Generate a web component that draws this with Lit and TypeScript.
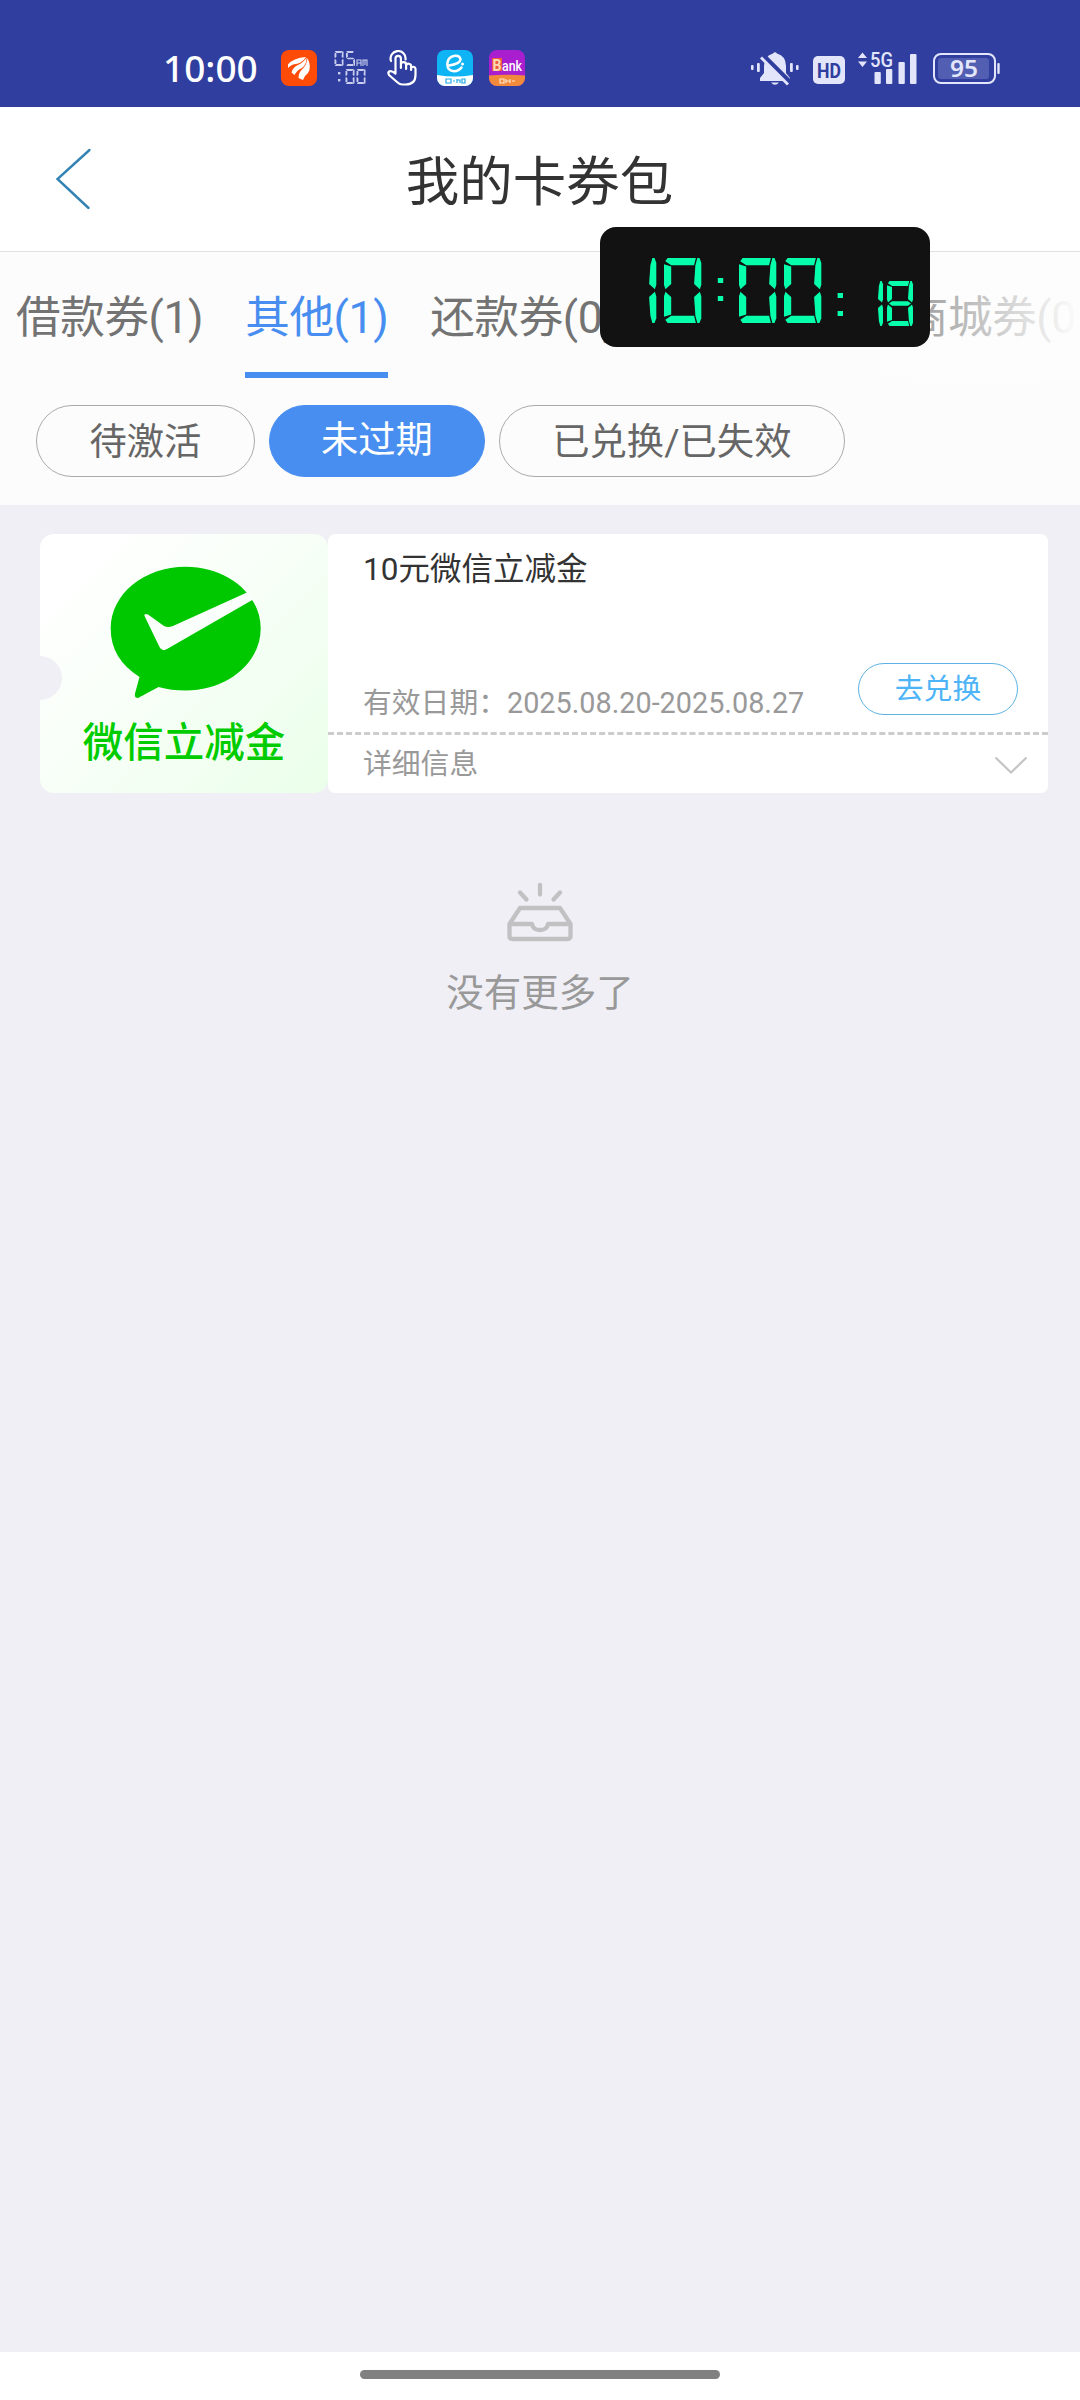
import { LitElement, html, svg, css } from "lit";
import { customElement, property } from "lit/decorators.js";
import { classMap } from "lit/directives/class-map.js";

// Seven-segment patterns, in the order: top, upper right, lower right, bottom, lower left, upper left, middle
const SEGMENTS: Record<string, number[]> = {
  "0": [1, 1, 1, 1, 1, 1, 0],
  "1": [0, 1, 1, 0, 0, 0, 0],
  "5": [1, 0, 1, 1, 0, 1, 1],
  "8": [1, 1, 1, 1, 1, 1, 1],
};

function digit(d: string, x: number, y: number, w: number, h: number, t: number) {
  const on = SEGMENTS[d];
  const r = t / 2;
  const m = y + h / 2;
  const g = t * 0.18;
  const pts = [
    // each segment is a bevelled bar
    [[x + g, y + r * 0.9], [x + r, y], [x + w - r * 1.5, y], [x + w - t, y + t], [x + t, y + t]],
    [[x + w - t + g, y + t], [x + w - r * 1.1, y], [x + w - r * 0.5, y], [x + w, y + r * 1.3], [x + w, m - t * 0.8], [x + w - r * 0.4, m - g], [x + w - t, m - t * 0.9]],
    [[x + w - t, m + t * 0.9], [x + w - r * 0.4, m + g], [x + w, m + t * 0.8], [x + w, y + h - r * 1.3], [x + w - r * 0.5, y + h], [x + w - r * 1.1, y + h], [x + w - t + g, y + h - t]],
    [[x + g, y + h - r * 0.9], [x + r, y + h], [x + w - r * 1.5, y + h], [x + w - t, y + h - t], [x + t, y + h - t]],
    [[x, m + t * 0.8], [x + r * 0.4, m + g], [x + t, m + t * 0.9], [x + t, y + h - t - g], [x, y + h - r - g * 2]],
    [[x, y + r + g * 2], [x + t, y + t + g], [x + t, m - t * 0.9], [x + r * 0.4, m - g], [x, m - t * 0.8]],
    [[x + r * 0.8, m], [x + t, m - r * 0.9], [x + w - t, m - r * 0.9], [x + w - r * 0.8, m], [x + w - t, m + r * 0.9], [x + t, m + r * 0.9]],
  ];
  return pts.map((p, i) => (on[i] ? svg`<polygon points=${p.map((q) => q.join(",")).join(" ")} />` : null));
}

@customElement("status-bar")
class StatusBar extends LitElement {
  static styles = css`
    :host { display: block; }
    .bar { height: 107px; box-sizing: border-box; padding: 18px 79px 0 163px; background: #303e9f; display: flex; align-items: center; }
    .time { width: 118px; font: 500 37px/50px "Noto Sans", sans-serif; color: #fff; margin-top: 10px; }
    .left { display: flex; gap: 16px; align-items: center; height: 36px; margin-top: 11px; }
    .right { margin-left: auto; height: 46px; margin-top: 11px; }
    svg { display: block; }
    .t { font-family: "Noto Sans", sans-serif; font-weight: 600; }
    .c { font-family: Roboto, sans-serif; font-weight: 700; }
    .m { font-family: Roboto, sans-serif; font-weight: 500; }
  `;
  render() {
    return html`<div class="bar">
      <div class="time">10:00</div>
      <div class="left">
        <svg width="36" height="36" viewBox="0 0 36 36">
          <rect width="36" height="36" rx="8" fill="#ff4b08" />
          <g fill="#fff">
            <path d="M7 14.500Q12 8 25 7Q21 13 15 14Q11 14 7 18Z" />
            <path d="M10.500 22.500Q12 17 17 15Q22 13 25.500 7.500Q26 14 21 18Q16 20 13.500 25Z" />
            <path d="M17.500 28Q17.500 22 22 18.500Q26 14 26.500 8Q31 17 27 23Q24 25 22 30Z" />
          </g>
        </svg>
        <svg width="36" height="36" viewBox="0 0 36 36" fill="#c9ceee">
          ${digit("0", 1.5, 1, 9, 15, 1.9)}${digit("5", 13, 1, 9, 15, 1.9)}
          <path d="M24 16V10H28V16M24 13H28M30 16V10H34V16M32 10V15" stroke="#c9ceee" stroke-width="1.1" fill="none" />
          <rect x="5" y="22" width="2.4" height="2.4" /><rect x="5" y="29" width="2.4" height="2.4" />
          ${digit("0", 12.5, 19, 9, 15, 1.9)}${digit("0", 23.5, 19, 9, 15, 1.9)}
        </svg>
        <svg width="36" height="36" viewBox="-1.500 0 36 36" fill="none" stroke="#fff" stroke-width="2.2" stroke-linecap="round" stroke-linejoin="round">
          <path d="M4.5 11A7.5 7.5 0 1 1 19 9.5" />
          <path d="M9 23V8.500A2.7 2.7 0 0 1 14.4 8.500V18M14.4 14.500A2.6 2.6 0 0 1 19.6 14.800V19M19.6 16A2.500 2.500 0 0 1 24.6 16.500V20M24.6 18A2.4 2.4 0 0 1 29 18.500V25Q29 34.500 19 34.500H16Q13 34.500 10.500 32L2.500 25Q1 22.500 3 21.300Q5 20.500 9 23.500" />
        </svg>
        <svg width="36" height="36" viewBox="0 0 36 36">
          <rect width="36" height="36" rx="8" fill="#0fb4f5" />
          <path d="M0 25Q18 28 36 25V28A8 8 0 0 1 28 36H8A8 8 0 0 1 0 28Z" fill="#fff" />
          <path d="M12 15.500Q23 14 23.500 9.500Q23 5.500 18 5.800Q10.500 7 10.300 14Q10.500 21 17 21.300Q22 21 24.500 17.500" fill="none" stroke="#fff" stroke-width="2.500" stroke-linecap="round" />
          <circle cx="25.500" cy="14" r="1.500" fill="#fff" />
          <path d="M9 29H14V33H9ZM16 31H18M20 29V33M20 30H23V33M25 29H28V33H25Z" fill="none" stroke="#23a9e8" stroke-width="1.2" />
        </svg>
        <svg width="36" height="36" viewBox="0 0 36 36">
          <rect width="36" height="36" rx="8" fill="#a91fd0" />
          <path d="M0 25.500Q18 24 36 25.500V28A8 8 0 0 1 28 36H8A8 8 0 0 1 0 28Z" fill="#f28a3c" />
          <rect x="3" y="8" width="10" height="13" fill="#f0583f" />
          <text class="c" x="3.500" y="21" font-size="17" fill="#ffd9b0" textLength="9" lengthAdjust="spacingAndGlyphs">B</text>
          <text class="m" x="13" y="21" font-size="15" fill="#fff" textLength="20" lengthAdjust="spacingAndGlyphs">ank</text>
          <path d="M11 29H15V33H11ZM17 29V33M17 31H21M21 29V33M23 31H26" fill="none" stroke="#ffe3c8" stroke-width="1.2" />
        </svg>
      </div>
      <svg class="right" width="252" height="46" viewBox="749 45 252 46" fill="#e3e6fa">
        <rect x="751" y="65" width="2.6" height="5" rx="1" /><rect x="757" y="63" width="2.8" height="9" rx="1" />
        <rect x="790" y="63" width="2.8" height="9" rx="1" /><rect x="796" y="65" width="2.6" height="5" rx="1" />
        <path d="M773 53.5Q775 51 777 53.5Q786 56 786 66V73L790 78V81H760V78L764 73V66Q764 56 773 53.5ZM771 82.5H779Q775 87 771 82.5Z" />
        <path d="M762 55L790 83" stroke="#303e9f" stroke-width="6" /><path d="M761 57.5L788 84.5" stroke="#e3e6fa" stroke-width="2.8" />
        <rect x="813" y="56" width="32" height="28" rx="5" />
        <text class="c" x="817" y="77.5" font-size="21" fill="#303e9f" textLength="24" lengthAdjust="spacingAndGlyphs">HD</text>
        <path d="M858 58L862.5 52.5L867 58ZM858 61.5L862.5 67L867 61.5Z" />
        <text class="m" x="870" y="67" font-size="20" textLength="23" lengthAdjust="spacingAndGlyphs">5G</text>
        <rect x="874.5" y="72" width="6.3" height="12" rx="1" /><rect x="886" y="69" width="6.3" height="15" rx="1" />
        <rect x="898.5" y="62" width="6.3" height="22" rx="1" /><rect x="910" y="54" width="6.5" height="30" rx="1" />
        <rect x="934" y="54" width="61" height="29" rx="7" fill="none" stroke="#e3e6fa" stroke-width="2" />
        <rect x="938" y="58" width="51" height="21" rx="3" fill="#525eb2" />
        <rect x="997.3" y="63" width="2.4" height="11" rx="1" />
        <text class="t" x="950" y="77.3" font-size="24" textLength="28" lengthAdjust="spacingAndGlyphs">95</text>
      </svg>
    </div>`;
  }
}

@customElement("floating-clock")
class FloatingClock extends LitElement {
  static styles = css`
    :host { display: block; width: 330px; height: 120px; border-radius: 16px; background: #121212; overflow: hidden; }
    svg { display: block; }
  `;
  render() {
    return html`<svg width="330" height="120" viewBox="600 227 330 120" fill="#06ffab">
      ${digit("1", 619, 258, 37.3, 65, 7.2)}${digit("0", 664, 258, 37.3, 65, 7.2)}
      <rect x="717.8" y="278" width="5.4" height="5" /><rect x="717.8" y="296" width="5.4" height="5" />
      ${digit("0", 739, 258, 37.3, 65, 7.2)}${digit("0", 784, 258, 37.3, 65, 7.2)}
      <rect x="837.6" y="293" width="5.4" height="5" /><rect x="837.6" y="311" width="5.4" height="5" />
      ${digit("1", 857, 281, 26, 45, 5)}${digit("8", 887, 281, 26, 45, 5)}
    </svg>`;
  }
}

@customElement("coupon-card")
class CouponCard extends LitElement {
  @property() name = "";
  @property() brand = "";
  @property() period = "";
  static styles = css`
    :host { display: flex; height: 259px; }
    .art { position: relative; overflow: hidden; width: 288px; border-radius: 14px; background: linear-gradient(135deg, #fff 10%, #f6fff6 55%, #eaffea 100%); display: flex; flex-direction: column; align-items: center; padding-top: 32px; box-sizing: border-box; }
    .art::before { content: ""; position: absolute; left: -22px; top: 122px; width: 44px; height: 44px; border-radius: 50%; background: #f0eff5; }
    .art svg { display: block; margin-left: 3px; }
    .brand { font-size: 40.5px; line-height: 56px; font-weight: 500; color: #0c0; margin-top: 17px; white-space: nowrap; }
    .info { flex: 1; background: #fff; border-radius: 7px; display: flex; flex-direction: column; }
    .main { height: 198px; box-sizing: border-box; padding: 13px 30px 17px 35px; display: flex; flex-direction: column; justify-content: space-between; }
    .name { font-size: 31.5px; line-height: 46px; color: #333; }
    .row { display: flex; justify-content: space-between; align-items: flex-end; }
    .period { font-size: 28.8px; line-height: 40px; color: #999; margin-bottom: -8px; white-space: pre; }
    .use { box-sizing: border-box; width: 160px; height: 52px; border: 1px solid #5fb2e2; border-radius: 26px; font-size: 28.8px; line-height: 50px; text-align: center; color: #4db4f8; }
    .more { flex: 1; border-top: 3px dashed #ccc; padding: 0 20px 6px 35px; display: flex; align-items: center; justify-content: space-between; font-size: 28.8px; color: #999; }
    .more svg { margin-top: 9px; }
  `;
  render() {
    return html`
      <div class="art">
        <svg width="152" height="132" viewBox="109 566 152 132">
          <path fill="#00c800" d="M184.7 566.7C226 566.7 259.7 594 259.7 628.6S226 690.6 184.7 690.6Q170 690.6 157.5 687L137 698Q133 698 134 693.5L138.5 677Q109.7 659 109.7 628.6C109.7 594 143 566.7 184.7 566.7Z" />
          <path fill="#fbfffb" d="M144 617Q142 613 147 614.5L163 626Q167 628 172 626L247 592L253 599L166 649Q161 652 158.500 647Z" />
        </svg>
        <div class="brand">${this.brand}</div>
      </div>
      <div class="info">
        <div class="main">
          <div class="name">${this.name}</div>
          <div class="row"><div class="period">有效日期：${this.period}</div><div class="use">去兑换</div></div>
        </div>
        <div class="more"><span>详细信息</span>
          <svg width="34" height="20" viewBox="0 0 34 20"><path d="M1.500 1.500L17 16.500L32.500 1.500" fill="none" stroke="#c4c4c4" stroke-width="2.200" /></svg>
        </div>
      </div>`;
  }
}

@customElement("app-root")
class AppRoot extends LitElement {
  static styles = css`
    :host { display: block; font-family: Roboto, "Noto Sans CJK SC", sans-serif; }
    .page { position: relative; width: 1080px; height: 2400px; background: #f0eff5; display: flex; flex-direction: column; overflow: hidden; }
    .header { height: 145px; box-sizing: border-box; border-bottom: 1px solid #e2e2e2; background: #fff; display: grid; grid-template-columns: 150px 1fr 150px; align-items: center; }
    .back { margin-left: 54px; margin-bottom: 1px; display: block; }
    .title { text-align: center; font-size: 53.5px; line-height: 70px; color: #333; margin: 8px 0 0 -1px; }
    .filters { height: 253px; background: #fcfcfc; }
    .tabs { position: relative; height: 126px; display: flex; overflow: hidden; padding-left: 16px; gap: 42px; font-size: 44.6px; letter-spacing: -0.4px; color: #737373; white-space: nowrap; }
    .tabs::after { content: ""; position: absolute; right: 0; top: 0; width: 240px; height: 126px; background: linear-gradient(90deg, rgba(253,253,253,0), #fdfdfd 100%); }
    .tab { flex: none; height: 126px; box-sizing: border-box; line-height: 66px; padding-top: 33px; }
    .tab.on { color: #488ef0; border-bottom: 6px solid #488ef0; }
    .tab.far { margin-left: auto; margin-right: -11px; }
    .chips { display: flex; gap: 14px; padding: 27px 36px 0; }
    .chip { height: 72px; box-sizing: border-box; border: 1px solid #aaa; border-radius: 36px; padding: 0 52.5px; font-size: 37.3px; line-height: 73px; color: #666; }
    .chip.on { color: #fff; background: #488ef0; border-color: #488ef0; line-height: 69px; padding: 0 51px; }
    .list { flex: 1; padding: 29px 32px 0 40px; }
    .empty { display: flex; flex-direction: column; align-items: center; margin: 89px 0 0 -8px; color: #999; font-size: 37.5px; line-height: 54px; gap: 24px; }
    .nav { height: 48px; background: #fff; display: flex; justify-content: center; align-items: flex-start; padding-top: 18px; box-sizing: border-box; }
    .pill { width: 360px; height: 9px; border-radius: 5px; background: #808080; }
    floating-clock { position: absolute; left: 600px; top: 227px; z-index: 2; }
  `;
  tabs = [
    { label: "借款券(1)" },
    { label: "其他(1)", on: true },
    { label: "还款券(0)" },
    { label: "商城券(0)", far: true },
  ];
  chips = [{ label: "待激活" }, { label: "未过期", on: true }, { label: "已兑换/已失效" }];
  render() {
    return html`<div class="page">
      <status-bar></status-bar>
      <div class="header">
        <svg class="back" width="38" height="62" viewBox="54 148 38 62"><path d="M89.500 150L57.500 179L88.500 208" fill="none" stroke="#3382b4" stroke-width="2.400" stroke-linecap="round" /></svg>
        <div class="title">我的卡券包</div>
      </div>
      <div class="filters">
        <div class="tabs">${this.tabs.map((t) => html`<div class=${classMap({ tab: true, on: !!t.on, far: !!t.far })}>${t.label}</div>`)}</div>
        <div class="chips">${this.chips.map((c) => html`<div class=${classMap({ chip: true, on: !!c.on })}>${c.label}</div>`)}</div>
      </div>
      <div class="list">
        <coupon-card name="10元微信立减金" brand="微信立减金" period="2025.08.20-2025.08.27"></coupon-card>
        <div class="empty">
          <svg width="68" height="60" viewBox="506 882 68 60" fill="none" stroke="#c1c1c3" stroke-width="4.300" stroke-linecap="round" stroke-linejoin="round">
            <path d="M540 885V894.500M520 892.500L526.500 899.500M560 892.500L553.500 899.500" />
            <path d="M509.500 924L520 908H560L570.500 924V936Q570.500 939 567.500 939H512.500Q509.500 939 509.500 936ZM509.500 924H532Q533 930 540 930T548 924H570.500" />
          </svg>
          <span>没有更多了</span>
        </div>
      </div>
      <div class="nav"><div class="pill"></div></div>
      <floating-clock></floating-clock>
    </div>`;
  }
}
